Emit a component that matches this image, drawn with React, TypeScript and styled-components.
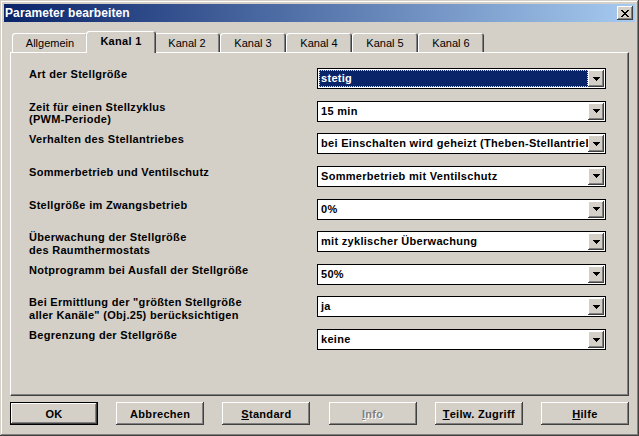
import React from 'react';
import styled, { createGlobalStyle, css } from 'styled-components';

const GlobalStyle = createGlobalStyle`
  html, body {
    margin: 0;
    padding: 0;
    background: #d4d0c8;
  }
  body {
    font-family: "Liberation Sans", Arial, sans-serif;
    -webkit-font-smoothing: none;
  }
`;

const raised = css`
  box-shadow: inset -1px -1px #404040, inset 1px 1px #ffffff,
    inset -2px -2px #808080, inset 2px 2px #d4d0c8;
`;

const Window = styled.div`
  width: 639px;
  height: 436px;
  box-sizing: border-box;
  padding: 4px;
  background: #d4d0c8;
  box-shadow: inset -1px -1px #404040, inset 1px 1px #d4d0c8,
    inset -2px -2px #808080, inset 2px 2px #ffffff;
  display: flex;
  flex-direction: column;
`;

const TitleBar = styled.div`
  height: 18px;
  flex: none;
  display: flex;
  align-items: center;
  justify-content: space-between;
  padding: 0 2px 0 1px;
  background: linear-gradient(to right, #0a246a, #a6caf0);
`;

const TitleText = styled.span`
  color: #fff;
  font-weight: bold;
  font-size: 12px;
  letter-spacing: 0.1px;
`;

const CloseButton = styled.div`
  width: 16px;
  height: 14px;
  background: #d4d0c8;
  ${raised}
  display: flex;
  align-items: center;
  justify-content: center;
  padding-right: 1px;
  box-sizing: border-box;
`;

const Client = styled.div`
  flex: 1;
  display: flex;
  flex-direction: column;
  padding: 9px 6px 7px;
`;

const TabStrip = styled.div`
  height: 21px;
  display: flex;
  align-items: flex-end;
  padding-left: 2px;
`;

const Tab = styled.div<{ $active?: boolean; $width: number }>`
  width: ${({ $width }) => $width}px;
  height: 19px;
  box-sizing: border-box;
  display: flex;
  align-items: center;
  justify-content: center;
  font-size: 11px;
  color: #000;
  background: #d4d0c8;
  border-radius: 3px 3px 0 0;
  box-shadow: inset 1px 1px #ffffff, inset -1px 0 #404040, inset -2px 0 #808080;
  margin-right: 0;
  ${({ $active, $width }) =>
    $active &&
    css`
      position: relative;
      z-index: 1;
      width: ${$width + 4}px;
      height: 22px;
      margin: 0 -2px -1px;
      padding-bottom: 2px;
      font-weight: bold;
      letter-spacing: 0.3px;
    `}
`;

const Panel = styled.div`
  height: 344px;
  box-sizing: border-box;
  border: 1px solid;
  border-color: #ffffff #404040 #404040 #ffffff;
  box-shadow: inset -1px -1px #808080;
  padding: 15px 0 0 18px;
`;

const ParamGrid = styled.div`
  display: grid;
  grid-template-columns: 288px 289px;
  grid-auto-rows: 21px;
  row-gap: 11.625px;
`;

const Label = styled.div`
  font-size: 11px;
  font-weight: bold;
  letter-spacing: 0.3px;
  line-height: 12.5px;
  color: #000;
  white-space: nowrap;
`;

const Combo = styled.div`
  box-sizing: border-box;
  height: 21px;
  border: 1px solid #000;
  padding: 1px;
  background: #fff;
  display: flex;
`;

const ComboValue = styled.div<{ $focused?: boolean }>`
  flex: 1;
  min-width: 0;
  overflow: hidden;
  white-space: nowrap;
  font-size: 11px;
  font-weight: bold;
  letter-spacing: 0.3px;
  line-height: 17px;
  padding-left: 2px;
  color: #000;
  ${({ $focused }) =>
    $focused &&
    css`
      background: #0a246a;
      color: #fff;
      outline: 1px dotted #e8dc9c;
      outline-offset: -1px;
    `}
`;

const DropButton = styled.div`
  width: 16px;
  flex: none;
  background: #d4d0c8;
  ${raised}
  display: flex;
  align-items: center;
  justify-content: center;
`;

const ButtonRow = styled.div`
  margin-top: 6px;
  display: flex;
  justify-content: space-between;
`;

const Button = styled.div<{ $default?: boolean; $disabled?: boolean }>`
  width: 88px;
  height: 23px;
  box-sizing: border-box;
  display: flex;
  align-items: center;
  justify-content: center;
  font-size: 11px;
  font-weight: bold;
  letter-spacing: 0.3px;
  color: #000;
  background: #d4d0c8;
  ${raised}
  ${({ $default }) =>
    $default &&
    css`
      border: 1px solid #000;
    `}
  ${({ $disabled }) =>
    $disabled &&
    css`
      color: #808080;
      text-shadow: 1px 1px #ffffff;
    `}
  u {
    text-decoration-thickness: 1px;
    text-underline-offset: 1px;
  }
`;

const CloseGlyph = () => (
  <svg width="8" height="7" viewBox="0 0 8 7" shapeRendering="crispEdges">
    <path
      fill="#000"
      d="M0 0h2v1H0zM6 0h2v1H6zM1 1h2v1H1zM5 1h2v1H5zM2 2h4v1H2zM3 3h2v1H3zM2 4h4v1H2zM1 5h2v1H1zM5 5h2v1H5zM0 6h2v1H0zM6 6h2v1H6z"
    />
  </svg>
);

const Arrow = () => (
  <svg width="7" height="4" viewBox="0 0 7 4" shapeRendering="crispEdges">
    <path fill="#000" d="M0 0h7v1H0zM1 1h5v1H1zM2 2h3v1H2zM3 3h1v1H3z" />
  </svg>
);

const tabs = [
  { label: 'Allgemein', width: 76 },
  { label: 'Kanal 1', width: 66, active: true },
  { label: 'Kanal 2', width: 66 },
  { label: 'Kanal 3', width: 66 },
  { label: 'Kanal 4', width: 66 },
  { label: 'Kanal 5', width: 66 },
  { label: 'Kanal 6', width: 66 },
];

const params = [
  { label: ['Art der Stellgröße'], value: 'stetig', focused: true },
  { label: ['Zeit für einen Stellzyklus', '(PWM-Periode)'], value: '15 min' },
  { label: ['Verhalten des Stellantriebes'], value: 'bei Einschalten wird geheizt (Theben-Stellantrieb)' },
  { label: ['Sommerbetrieb und Ventilschutz'], value: 'Sommerbetrieb mit Ventilschutz' },
  { label: ['Stellgröße im Zwangsbetrieb'], value: '0%' },
  { label: ['Überwachung der Stellgröße', 'des Raumthermostats'], value: 'mit zyklischer Überwachung' },
  { label: ['Notprogramm bei Ausfall der Stellgröße'], value: '50%' },
  { label: ['Bei Ermittlung der "größten Stellgröße', 'aller Kanäle" (Obj.25) berücksichtigen'], value: 'ja' },
  { label: ['Begrenzung der Stellgröße'], value: 'keine' },
];

const App = () => {
  return (
    <>
      <GlobalStyle />
      <Window>
        <TitleBar>
          <TitleText>Parameter bearbeiten</TitleText>
          <CloseButton><CloseGlyph /></CloseButton>
        </TitleBar>
        <Client>
          <TabStrip>
            {tabs.map((t) => (
              <Tab key={t.label} $width={t.width} $active={t.active}>{t.label}</Tab>
            ))}
          </TabStrip>
          <Panel>
            <ParamGrid>
              {params.map((p) => (
                <React.Fragment key={p.label[0]}>
                  <Label>
                    {p.label.map((line) => <div key={line}>{line}</div>)}
                  </Label>
                  <Combo>
                    <ComboValue $focused={p.focused}>{p.value}</ComboValue>
                    <DropButton><Arrow /></DropButton>
                  </Combo>
                </React.Fragment>
              ))}
            </ParamGrid>
          </Panel>
          <ButtonRow>
            <Button $default>OK</Button>
            <Button>Abbrechen</Button>
            <Button><u>S</u>tandard</Button>
            <Button $disabled><u>I</u>nfo</Button>
            <Button><u>T</u>eilw. Zugriff</Button>
            <Button><u>H</u>ilfe</Button>
          </ButtonRow>
        </Client>
      </Window>
    </>
  );
};

export default App;
